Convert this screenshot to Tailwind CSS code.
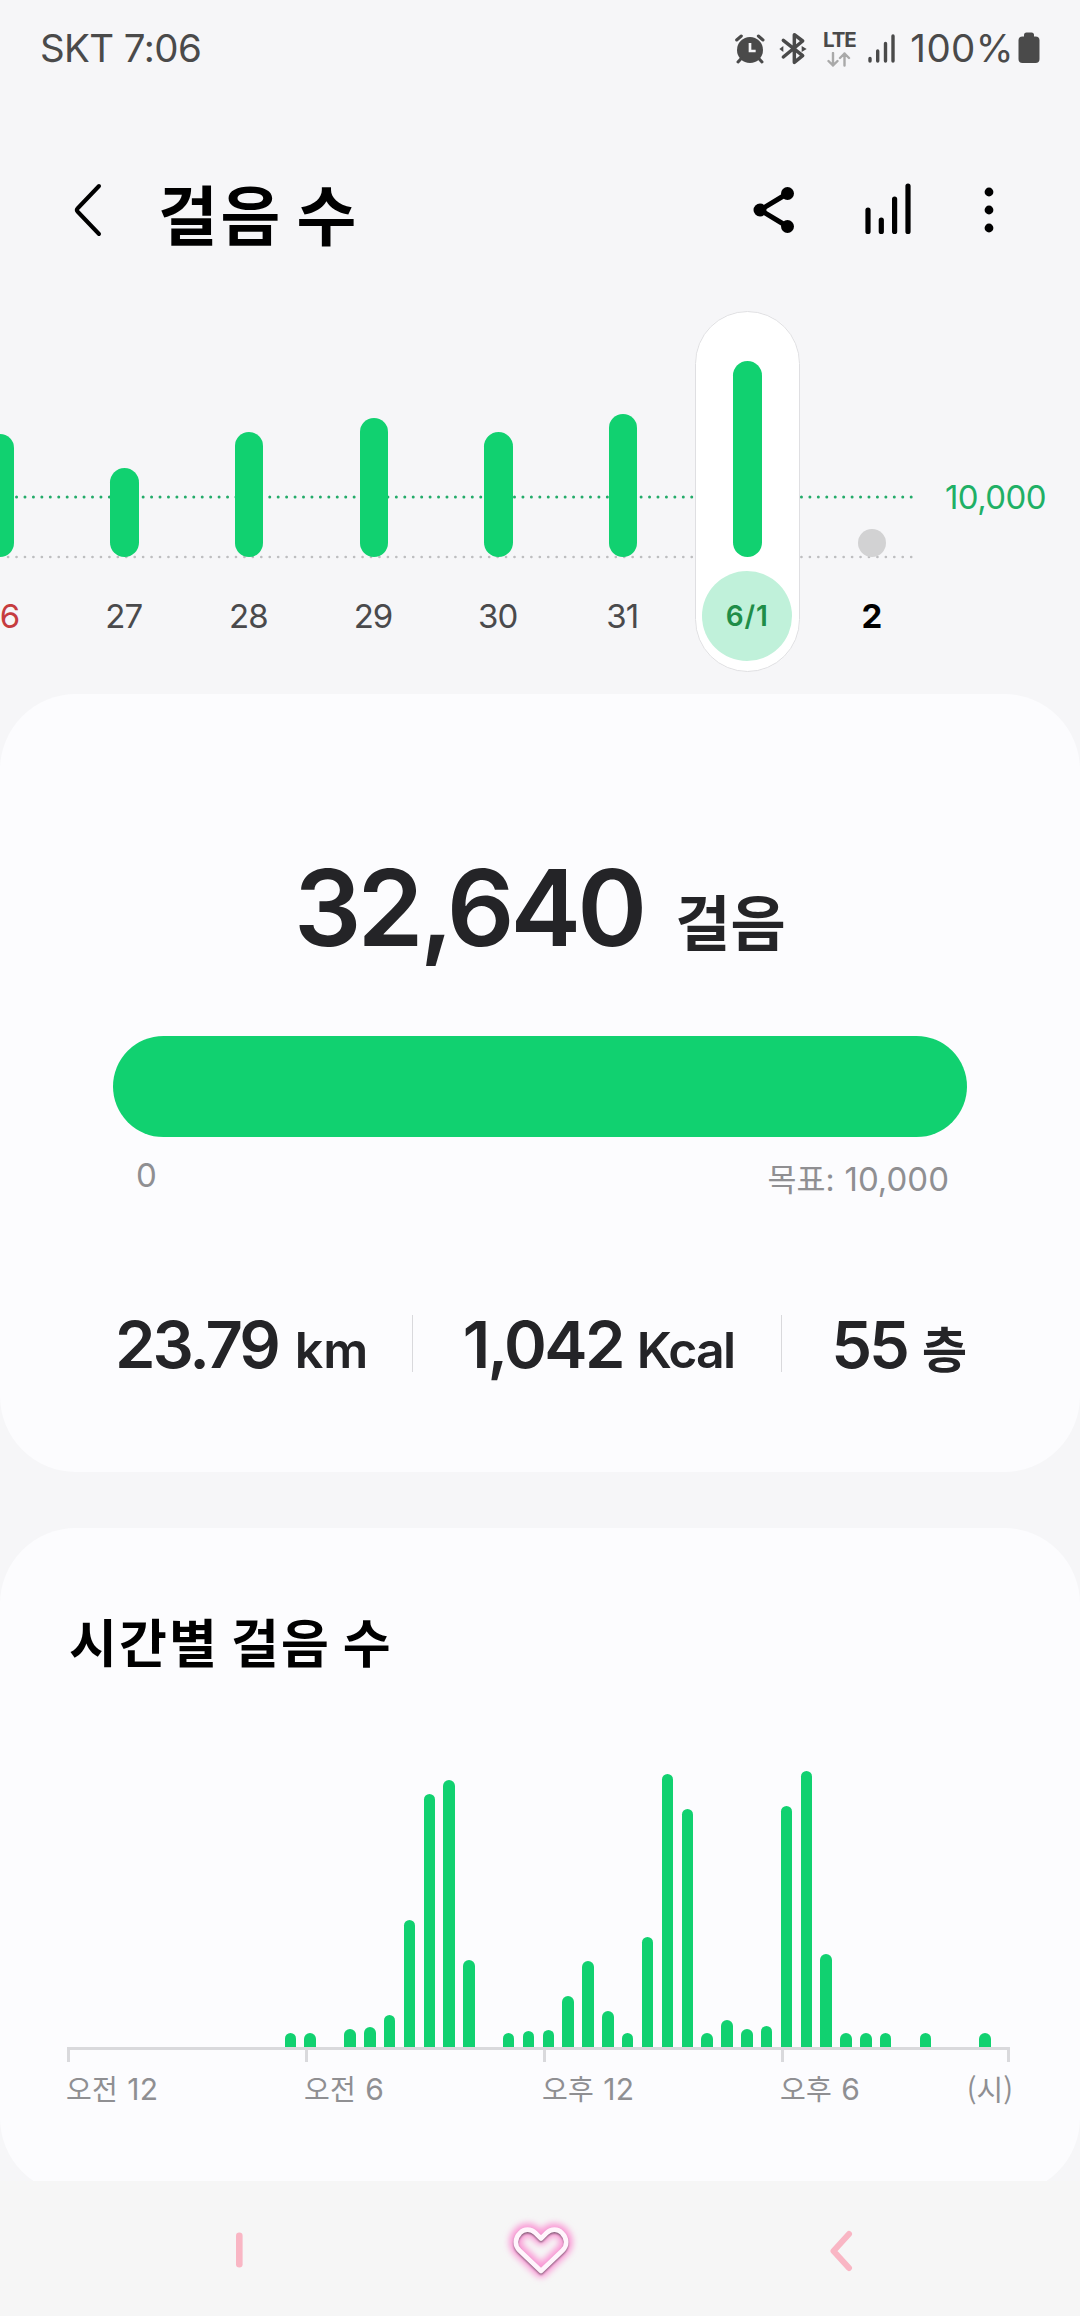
<!DOCTYPE html>
<html lang="ko">
<head>
<meta charset="utf-8">
<title>걸음 수</title>
<script src="https://cdn.jsdelivr.net/npm/@tailwindcss/browser@4"></script>
</head>
<body class="w-[1080px] h-[2316px] overflow-hidden bg-[#f6f6f8] flex flex-col font-['Inter','Noto_Sans_CJK_KR',sans-serif] text-black whitespace-nowrap">
<main class="h-[2181px] shrink-0 overflow-hidden flex flex-col">

  <!-- Status bar -->
  <div class="h-[97px] shrink-0 flex items-start pl-[40px] pr-[40px] pt-[29px] text-[#4a4a4a]">
    <span class="text-[38.5px] leading-none tracking-[-0.6px]">SKT 7:06</span>
    <div class="ml-auto flex items-start">
      <svg class="mt-[4px]" width="30" height="31" viewBox="104 99 90 93">
        <circle cx="149" cy="150" r="39" fill="#4a4a4a"/>
        <path d="M109 120l14-12M188 120l-14-12M122 176l-9 10M176 176l9 10" stroke="#4a4a4a" stroke-width="9" stroke-linecap="round"/>
        <path d="M149 129v24h17" fill="none" stroke="#f6f6f8" stroke-width="8"/>
      </svg>
      <svg class="ml-[14px] mt-[3px]" width="28" height="33" viewBox="237 97 84 99">
        <path d="M250 122l58 46-25 20v-83l25 19-58 48" fill="none" stroke="#4a4a4a" stroke-width="10.5" stroke-linejoin="round" stroke-linecap="round"/>
        <path d="M238 148l12-9v18zM320 148l-15-9v18z" fill="#4a4a4a"/>
      </svg>
      <div class="ml-[15px] mr-px mt-[1px] w-[34px] flex flex-col items-center">
        <span class="text-[20.5px] leading-none font-bold tracking-[-1px]">LTE</span>
        <svg class="mt-px" width="24" height="15" viewBox="0 0 24 15" fill="none" stroke="#a9a9a9" stroke-width="2.4" stroke-linecap="round" stroke-linejoin="round"><path d="M6 1v12.5M1.5 9L6 13.5 10.500 9M17.500 13.500V1.500M13 6l4.500-4.500L22 6"/></svg>
      </div>
      <svg class="ml-[10px] mt-[5px]" width="28" height="30" viewBox="0 0 28 30" stroke="#4a4a4a" stroke-width="3.400" stroke-linecap="round"><path d="M3 24.500v2.500M10.700 17v10M18.500 9.500V27M26 2v25"/></svg>
      <span class="ml-[15px] text-[38.5px] leading-none tracking-[0.400px]">100%</span>
      <svg class="ml-[4px] mt-[3px]" width="22" height="32" viewBox="0 0 22 32" fill="#4a4a4a"><rect x="6" y="0.500" width="10" height="8" rx="2.500"/><rect x="0.500" y="4.500" width="21" height="26.500" rx="4"/></svg>
    </div>
  </div>

  <!-- App bar -->
  <header class="h-[214px] shrink-0 flex items-start pl-[73px] pr-[86px] pt-[82px]">
    <svg class="mt-[4px]" width="29" height="54" viewBox="0 0 29 54" fill="none" stroke="#000" stroke-width="4" stroke-linecap="round" stroke-linejoin="round"><path d="M26 3L4.500 25.500Q3 27 4.500 28.500L26 51"/></svg>
    <h1 class="ml-[56px] mt-px text-[65px] leading-none font-bold tracking-[2.600px] [word-spacing:-7px] font-['Noto_Sans_CJK_KR','Inter',sans-serif]">걸음 수</h1>
    <svg class="ml-auto mt-[6px]" width="42" height="50" viewBox="0 0 42 50"><path d="M34.500 8.500L7 25l27.500 16.500" fill="none" stroke="#000" stroke-width="5"/><circle cx="34.500" cy="8.500" r="6.500"/><circle cx="7" cy="25" r="6.500"/><circle cx="34.500" cy="41.500" r="6.500"/></svg>
    <svg class="ml-[70px] mt-[4px]" width="46" height="54" viewBox="0 0 46 54" stroke="#000" stroke-width="5.200" stroke-linecap="round"><path d="M3 25.500v21.500M16.300 35.500v11.500M29.600 14.500v32.500M43 1.500v45.500" transform="translate(0 1.500)"/></svg>
    <svg class="ml-[73px] mt-[8px]" width="10" height="46" viewBox="0 0 10 46"><circle cx="5" cy="5" r="4.400"/><circle cx="5" cy="23" r="4.400"/><circle cx="5" cy="41" r="4.400"/></svg>
  </header>

  <!-- Daily chart -->
  <section class="relative h-[361px] shrink-0">
    <svg class="absolute left-0 top-0" width="1080" height="361" fill="none" stroke-linecap="round">
      <path d="M8.100 186H912" stroke="#23ab69" stroke-width="3" stroke-dasharray="0 8.440"/>
      <path d="M8.100 246H912" stroke="#bebec0" stroke-width="2.700" stroke-dasharray="0 8.440"/>
    </svg>
    <div id="days" class="relative flex ml-[-62.300px] w-[996.800px]"></div>
    <span class="absolute left-[945px] top-[169.500px] text-[33px] leading-none tracking-[-0.600px] text-[#1fb066]">10,000</span>
  </section>

  <!-- Summary card -->
  <section class="mt-[22px] h-[778px] shrink-0 rounded-[76px] bg-[#fcfcfe] px-[113px] pt-[161px] text-[#242427]">
    <div class="flex items-baseline pl-[181px] font-semibold leading-none h-[106px]">
      <span class="text-[106px] leading-none tracking-[-3.900px]">32,640</span>
      <span class="ml-[32px] text-[60px] leading-none font-bold">걸음</span>
    </div>
    <div class="mt-[75px] h-[101px] rounded-full bg-[#11d170]"></div>
    <div class="flex justify-between items-start pl-[23px] pr-[18px] pt-[22px] h-[175px] text-[33px] leading-none text-[#8f8f92]">
      <span>0</span>
      <span class="mt-[4px] flex items-baseline"><span class="text-[31.500px]">목표:</span><span class="ml-[10px]">10,000</span></span>
    </div>
    <div class="flex items-start font-semibold leading-none">
      <div class="w-[300px] flex items-baseline"><span class="ml-[2px] text-[65px] tracking-[-3.100px]">23.79</span><span class="ml-[17px] text-[50px]">km</span></div>
      <div class="mt-[3px] w-px h-[57px] bg-[#d9d9dc]"></div>
      <div class="w-[369px] flex items-baseline"><span class="ml-[50px] text-[65px] tracking-[-2.600px]">1,042</span><span class="ml-[14px] text-[50px] tracking-[-1.800px]">Kcal</span></div>
      <div class="ml-px mt-[3px] w-px h-[57px] bg-[#d9d9dc]"></div>
      <div class="flex items-baseline"><span class="ml-[49px] text-[65px] tracking-[-3px]">55</span><span class="ml-[15px] text-[49px] font-bold">층</span></div>
    </div>
  </section>

  <!-- Hourly card -->
  <section class="mt-[56px] h-[666px] shrink-0 rounded-[76px] bg-[#fcfcfe] pt-[87px]">
    <h2 class="ml-[69px] h-[52px] text-[52px] leading-none font-bold tracking-[2.200px] [word-spacing:-5px] font-['Noto_Sans_CJK_KR','Inter',sans-serif]">시간별 걸음 수</h2>
    <div id="hours" class="mt-[80px] h-[300px] ml-[62.200px] w-[952.200px] flex items-end"></div>
    <div class="ml-[67px] w-[943px] h-[15px] border-t-3 border-x-3 border-[#d9d9dc] flex">
      <div class="w-[238px] border-r-3 border-[#d9d9dc]"></div>
      <div class="w-[238px] border-r-3 border-[#d9d9dc]"></div>
      <div class="w-[238px] border-r-3 border-[#d9d9dc]"></div>
    </div>
    <div class="mt-[12px] ml-[66px] mr-[67px] flex text-[30px] leading-none text-[#8f8f92]">
      <div class="w-[238px] flex items-baseline"><span class="text-[28px] tracking-[0.300px]">오전</span><span class="ml-[9px] tracking-[0.500px]">12</span></div>
      <div class="w-[238px] flex items-baseline"><span class="text-[28px] tracking-[0.300px]">오전</span><span class="ml-[9px]">6</span></div>
      <div class="w-[238px] flex items-baseline"><span class="text-[28px] tracking-[0.300px]">오후</span><span class="ml-[9px] tracking-[0.500px]">12</span></div>
      <div class="flex items-baseline"><span class="text-[28px] tracking-[0.300px]">오후</span><span class="ml-[9px]">6</span></div>
      <span class="ml-auto text-[29px] font-['Noto_Sans_CJK_KR','Inter',sans-serif]">(시)</span>
    </div>
  </section>
</main>

<!-- Navigation bar -->
<nav class="h-[135px] shrink-0 bg-[#f6f6f6] flex items-start pl-[236px] pr-[225px] pt-[24px]">
  <svg class="mt-[26px]" width="7" height="38" viewBox="0 0 7 38"><rect y="1.500" width="6.600" height="35" rx="3.300" fill="#f9b6c4"/></svg>
  <svg class="ml-[247px]" width="100" height="90" viewBox="0 0 100 90" fill="none" stroke-linejoin="round">
    <defs>
      <path id="heart" d="M51 33.500L45.500 28C41 23.500 34 23.500 30 28C24.500 33.500 24.500 40.500 29.500 45.500L51 66L72.500 45.500C77.500 40.500 77.500 33.500 72 28C68 23.500 61 23.500 56.500 28Z"/>
      <filter id="glow" x="-50%" y="-50%" width="200%" height="200%"><feGaussianBlur stdDeviation="3"/></filter>
      <filter id="shade" x="-50%" y="-50%" width="200%" height="200%"><feGaussianBlur stdDeviation="0.800"/></filter>
    </defs>
    <use href="#heart" stroke="#fa9ad6" stroke-width="13" filter="url(#glow)"/>
    <use href="#heart" y="1.600" stroke="#74516a" stroke-width="4" filter="url(#shade)"/>
    <use href="#heart" stroke="#fff5fc" stroke-width="4.600"/>
  </svg>
  <svg class="ml-auto mt-[25px]" width="26" height="42" viewBox="0 0 26 42" fill="none" stroke="#f9b6c4" stroke-width="6" stroke-linecap="round" stroke-linejoin="round"><path d="M20 4L4.500 21 20 38"/></svg>
</nav>

<script>
const days = [
  ['26', 123, 'sun'], ['27', 89], ['28', 125], ['29', 139.5], ['30', 125], ['31', 143],
  ['6/1', 196, 'selected'], ['2', 28.5, 'today'],
];
document.getElementById('days').innerHTML = days.map(([label, h, kind]) => {
  const bar = `<div class="w-[28.500px] rounded-full ${kind === 'today' ? 'bg-[#d2d2d3]' : 'bg-[#11d170]'}" style="height:${h}px"></div>`;
  if (kind === 'selected') {
    return `<div class="w-[124.600px] shrink-0 h-[361px] pl-[9.800px] pr-[10.300px]"><div class="h-full rounded-full bg-white outline outline-[#dfdfe2] -outline-offset-1 flex flex-col items-center">
      <div class="h-[246px] flex items-end">${bar}</div>
      <div class="mt-[14px] w-[90px] h-[90px] rounded-full bg-[#c0f1da] flex items-center justify-center text-[28px] leading-none font-semibold tracking-[0.900px] text-[#1f8d48]">${label}</div></div></div>`;
  }
  const tone = kind === 'sun' ? 'text-[#c63c3f]' : kind === 'today' ? 'pr-[1.500px] text-black font-bold' : 'pr-[1.500px] text-[#4a4a4c]';
  return `<div class="w-[124.600px] shrink-0 h-[361px] flex flex-col items-center">
    <div class="h-[246px] flex items-end">${bar}</div>
    <div class="mt-[42.500px] text-[33px] leading-none tracking-[-0.900px] ${tone}">${label}</div></div>`;
}).join('');

const slots = {11:14,12:14,14:18,15:20,16:32,17:127,18:253,19:267,20:87,22:14,23:16,24:17,25:51,26:86.5,27:36,28:14.5,
  29:110,30:273,31:238.5,32:14,33:27,34:18,35:21,36:241.5,37:276,38:93,39:14,40:14,41:14,43:14,46:14};
document.getElementById('hours').innerHTML = Array.from({length: 48}, (_, i) =>
  `<div class="flex-1 flex justify-center">${slots[i] ? `<div class="w-[11.500px] rounded-t-full bg-[#11d170]" style="height:${slots[i]}px"></div>` : ''}</div>`).join('');
</script>
</body>
</html>
